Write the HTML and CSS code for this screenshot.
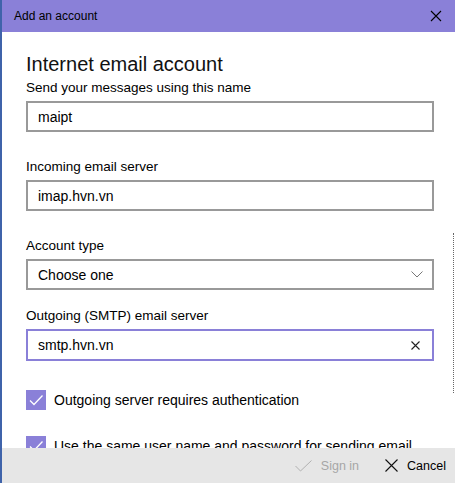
FILE: index.html
```html
<!DOCTYPE html>
<html lang="en">
<head>
    <meta charset="UTF-8">
    <meta name="viewport" content="width=device-width, initial-scale=1.0">
    <title>Add an account</title>
    <link rel="stylesheet" href="styles.css">
</head>
<body>
    <div class="dialog">
        <div class="titlebar">
            <span class="title">Add an account</span>
            <svg class="close-icon" width="12" height="12" viewBox="0 0 12 12">
                <path d="M1 1 L11 11 M11 1 L1 11" stroke="#000" stroke-width="1.1" fill="none"/>
            </svg>
        </div>

        <div class="content">
            <h1>Internet email account</h1>

            <div class="form-group">
                <label for="name">Send your messages using this name</label>
                <input type="text" id="name" class="field" value="maipt">
            </div>

            <div class="form-group">
                <label for="incoming">Incoming email server</label>
                <input type="text" id="incoming" class="field" value="imap.hvn.vn">
            </div>

            <div class="form-group">
                <label>Account type</label>
                <div class="field select">
                    <span>Choose one</span>
                    <svg width="12" height="7" viewBox="0 0 12 7">
                        <path d="M0.5 0.5 L6 6 L11.5 0.5" stroke="#777" stroke-width="1" fill="none"/>
                    </svg>
                </div>
            </div>

            <div class="form-group smtp">
                <label for="outgoing">Outgoing (SMTP) email server</label>
                <div class="field focused">
                    <span>smtp.hvn.vn</span>
                    <svg width="9" height="9" viewBox="0 0 9 9">
                        <path d="M0.5 0.5 L8.5 8.5 M8.5 0.5 L0.5 8.5" stroke="#222" stroke-width="1.1" fill="none"/>
                    </svg>
                </div>
            </div>

            <div class="check-row">
                <span class="checkbox">
                    <svg width="20" height="20" viewBox="0 0 20 20">
                        <path d="M4 10.5 L8 14.5 L16.5 5.5" stroke="#fff" stroke-width="1.3" fill="none"/>
                    </svg>
                </span>
                <span>Outgoing server requires authentication</span>
            </div>

            <div class="check-row">
                <span class="checkbox">
                    <svg width="20" height="20" viewBox="0 0 20 20">
                        <path d="M4 10.5 L8 14.5 L16.5 5.5" stroke="#fff" stroke-width="1.3" fill="none"/>
                    </svg>
                </span>
                <span>Use the same user name and password for sending email</span>
            </div>

            <div class="scroll-thumb"></div>
        </div>

        <div class="footer">
            <span class="action disabled">
                <svg width="17" height="12" viewBox="0 0 17 12">
                    <path d="M0.5 6 L5.5 11 L16.5 0.5" stroke="#b0b0b0" stroke-width="1" fill="none"/>
                </svg>
                Sign in
            </span>
            <span class="action">
                <svg width="13" height="13" viewBox="0 0 13 13">
                    <path d="M0.5 0.5 L12.5 12.5 M12.5 0.5 L0.5 12.5" stroke="#111" stroke-width="1.1" fill="none"/>
                </svg>
                Cancel
            </span>
        </div>
    </div>
</body>
</html>
```

FILE: styles.css
```css
body {
    margin: 0;
    font-family: "Liberation Sans", Arial, sans-serif;
    color: #000;
    background-color: #fff;
}
.dialog {
    width: 453px;
    height: 483px;
    border-left: 2px solid #3f63aa;
    display: flex;
    flex-direction: column;
    overflow: hidden;
}
.titlebar {
    height: 32px;
    flex-shrink: 0;
    background-color: #8a80d8;
    display: flex;
    align-items: center;
    justify-content: space-between;
    padding: 0 13px 0 12px;
}
.title {
    font-size: 12px;
    color: #000;
    padding-bottom: 1px;
}
.close-icon {
    display: block;
}
.content {
    flex: 1;
    position: relative;
    overflow: hidden;
    padding: 20px 19px 0 24px;
}
h1 {
    font-size: 20px;
    font-weight: normal;
    line-height: 24px;
    margin: 0 0 3px 0;
    color: #111;
}
.form-group {
    margin-bottom: 26px;
}
.form-group label {
    display: block;
    font-size: 13.5px;
    line-height: 18px;
    margin-bottom: 4px;
}
.field {
    box-sizing: border-box;
    width: 408px;
    height: 31px;
    border: 2px solid #999;
    padding: 0 10px;
    font-family: "Liberation Sans", Arial, sans-serif;
    font-size: 14px;
    color: #000;
    outline: none;
    display: flex;
    align-items: center;
    justify-content: space-between;
    margin: 0;
    background: #fff;
}
.select {
    padding-right: 9px;
}
.form-group.smtp {
    margin-top: -9px;
    margin-bottom: 29px;
}
.focused {
    border-color: #8a80d8;
    padding-right: 12px;
    height: 32px;
}
.check-row {
    display: flex;
    align-items: center;
    gap: 8px;
    font-size: 14px;
    margin-bottom: 26px;
    white-space: nowrap;
}
.checkbox {
    width: 20px;
    height: 20px;
    background-color: #8a80d8;
    flex-shrink: 0;
}
.checkbox svg {
    display: block;
}
.scroll-thumb {
    position: absolute;
    right: 1px;
    top: 201px;
    height: 160px;
    border-right: 1px dotted #666;
}
.footer {
    height: 35px;
    flex-shrink: 0;
    background-color: #e6e6e6;
    display: flex;
    justify-content: flex-end;
    align-items: center;
    gap: 26px;
    padding-right: 9px;
    font-size: 12.5px;
}
.action {
    display: flex;
    align-items: center;
    gap: 9px;
    color: #000;
}
.action.disabled {
    color: #a6a6a6;
}
```
